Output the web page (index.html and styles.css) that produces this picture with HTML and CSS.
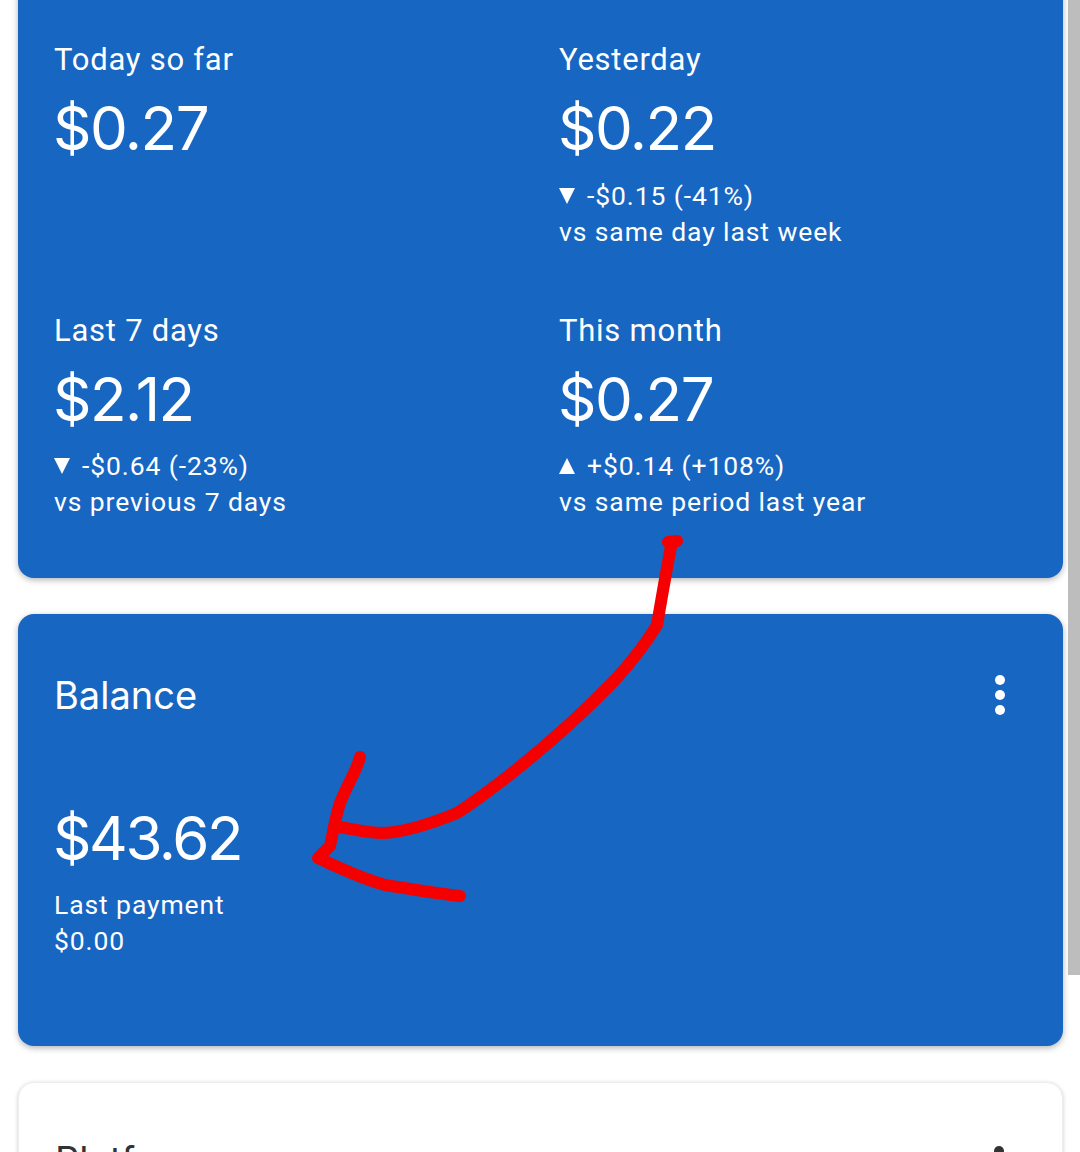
FILE: index.html
```html
<html>

<head>
    <title>adsense</title>

    <link rel="stylesheet" href="styles.css">

</head>

<body>

    <div id="scrollbar"></div>

    <div id="page">

        <div class="card blue stats">
            <div class="stat">
                <div class="label">Today so far</div>
                <div class="value">$0.27</div>
            </div>
            <div class="stat">
                <div class="label">Yesterday</div>
                <div class="value">$0.22</div>
                <div class="delta"><span class="tri down"></span>-$0.15 (-41%)</div>
                <div class="delta">vs same day last week</div>
            </div>
            <div class="stat">
                <div class="label">Last 7 days</div>
                <div class="value">$2.12</div>
                <div class="delta"><span class="tri down"></span>-$0.64 (-23%)</div>
                <div class="delta">vs previous 7 days</div>
            </div>
            <div class="stat">
                <div class="label">This month</div>
                <div class="value">$0.27</div>
                <div class="delta"><span class="tri up"></span>+$0.14 (+108%)</div>
                <div class="delta">vs same period last year</div>
            </div>
        </div>

        <div class="card blue balance">
            <div class="head">
                <div class="title">Balance</div>
                <div class="dots"><i></i><i></i><i></i></div>
            </div>
            <div class="value">$43.62</div>
            <div class="delta">Last payment</div>
            <div class="delta">$0.00</div>
        </div>

        <div class="card platform">
            <div class="head">
                <div class="title">Platforms</div>
                <div class="dots"><i></i><i></i><i></i></div>
            </div>
        </div>

    </div>

    <svg id="scribble" width="1080" height="1152" viewBox="0 0 1080 1152">
        <path d="M668 542 L677 541 M672 542 C669 556 663 590 657 625 C648 640 635 658 615 680 C590 706 560 735 507 777 C490 790 470 805 457 813 C440 820 410 832 383 833 C365 833 350 828 338 827" />
        <path d="M360 757 C358 768 347 785 340 803 C336 815 333 832 330 846 L318 858 C340 868 360 878 385 885 C410 889 440 894 460 896" />
    </svg>

</body>

</html>
```

FILE: styles.css
```css
html, body {
    margin: 0;
    height: 1152px;
    overflow: hidden;
    background: #fff;
}

body {
    font-family: Roboto, sans-serif;
    position: relative;
}

#page {
    width: 1045px;
    margin-left: 18px;
}

#scrollbar {
    position: absolute;
    top: 0;
    right: 0;
    width: 12px;
    height: 975px;
    background: #bdbdbd;
}

#scribble {
    position: absolute;
    top: 0;
    left: 0;
}

#scribble path {
    fill: none;
    stroke: #f40000;
    stroke-width: 12px;
    stroke-linecap: round;
    stroke-linejoin: round;
}

.card {
    border-radius: 16px;
    box-shadow: 0 2px 6px rgba(0, 0, 0, 0.3);
    margin-bottom: 36px;
    box-sizing: border-box;
}

.blue {
    background: #1766c2;
    color: #fff;
}

.stats {
    margin-top: -20px;
    height: 598px;
    padding: 61px 36px 0;
    display: grid;
    grid-template-columns: 505px 1fr;
    grid-template-rows: 270px 1fr;
}

.label {
    font-size: 31px;
    line-height: 38px;
    letter-spacing: 0.75px;
}

.stat:nth-child(n+3) .label {
    margin-top: 1px;
}

.value {
    font-family: Inter, sans-serif;
    font-weight: 400;
    font-size: 60px;
    line-height: 70px;
    letter-spacing: -1.5px;
    margin: 14px 0 15px -1px;
}

.stat:nth-child(n+3) .value {
    margin-bottom: 14px;
}

.delta {
    font-size: 26.5px;
    line-height: 36px;
    letter-spacing: 0.9px;
}

.tri {
    display: inline-block;
    width: 0;
    height: 0;
    margin-right: 12px;
    border-left: 8px solid transparent;
    border-right: 8px solid transparent;
    vertical-align: 1px;
}

.down {
    border-top: 16px solid #fff;
}

.up {
    border-bottom: 16px solid #fff;
}

.balance {
    height: 432px;
    padding: 58px 36px 0;
}

.head {
    display: flex;
    justify-content: space-between;
    align-items: center;
}

.title {
    font-family: Inter, sans-serif;
    font-weight: 400;
    font-size: 38px;
    line-height: 46px;
}

.dots {
    margin-right: 22px;
    width: 10px;
    display: flex;
    flex-direction: column;
    gap: 5px;
}

.dots i {
    width: 10px;
    height: 10px;
    border-radius: 50%;
    background: #fff;
}

.balance .value {
    margin-top: 85px;
    margin-bottom: 14px;
    letter-spacing: -2.4px;
}

.platform {
    height: 200px;
    padding: 54px 36px 0;
    background: #fff;
    color: #333;
    border: 1px solid #eee;
    box-shadow: 0 1px 4px rgba(0, 0, 0, 0.2);
}

.platform .head {
    align-items: flex-start;
}

.platform .dots {
    margin-top: 9px;
}

.platform .dots i {
    background: #333;
}
```
